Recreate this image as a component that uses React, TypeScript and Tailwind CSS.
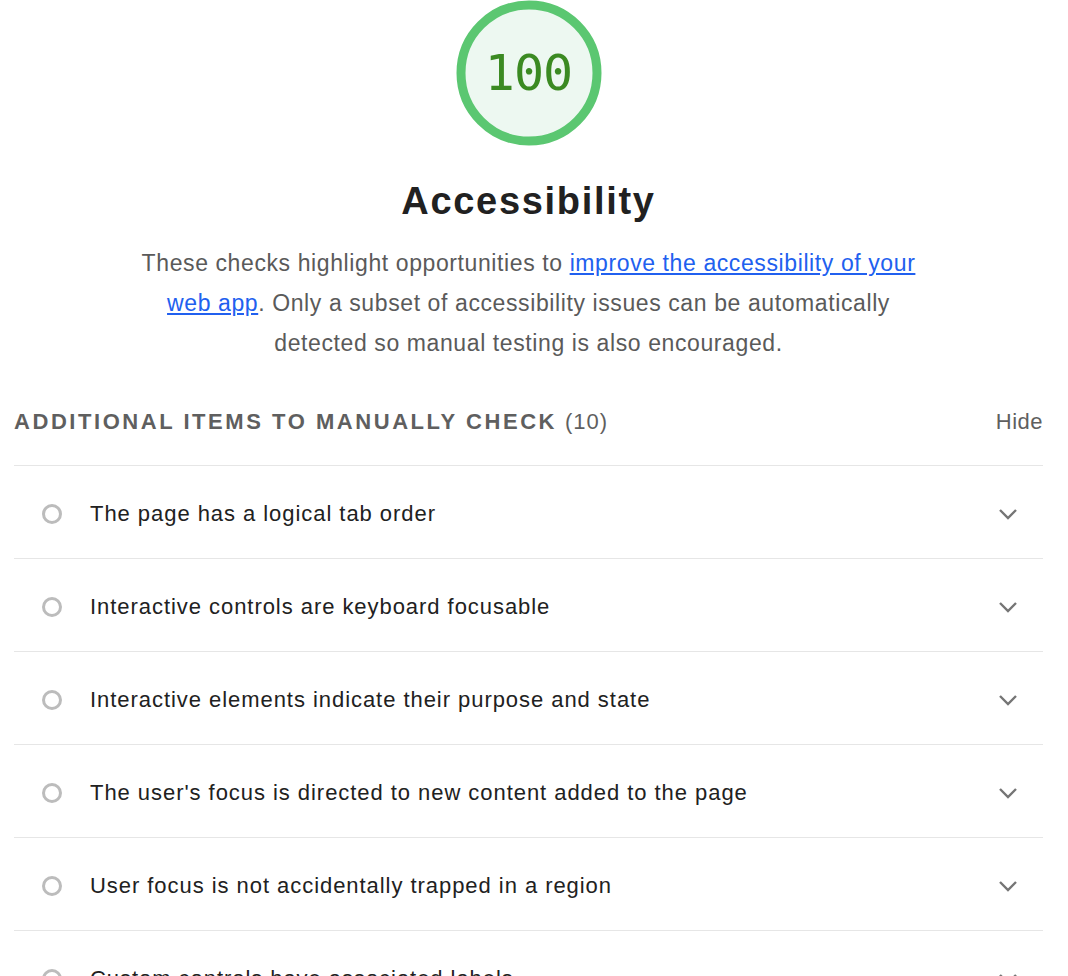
const items = [
  'The page has a logical tab order',
  'Interactive controls are keyboard focusable',
  'Interactive elements indicate their purpose and state',
  "The user's focus is directed to new content added to the page",
  'User focus is not accidentally trapped in a region',
  'Custom controls have associated labels',
];

function Gauge({ score }: { score: number }) {
  return (
    <div className="relative w-[148px] h-[148px]">
      <svg viewBox="0 0 148 148" className="absolute inset-0">
        <circle cx="74" cy="74" r="68" fill="#edf8f1" stroke="#5bc771" strokeWidth="9" />
      </svg>
      <div className="absolute inset-0 flex items-center justify-center font-['DejaVu_Sans_Mono',monospace] text-[50px] text-[#3b8a22] tracking-[-1px]">
        {score}
      </div>
    </div>
  );
}

function Chevron() {
  return (
    <svg width="20" height="12" viewBox="0 0 20 12" className="shrink-0">
      <polyline points="2,2 10,10 18,2" fill="none" stroke="#757575" strokeWidth="2.4" />
    </svg>
  );
}

function ManualItem({ title }: { title: string }) {
  return (
    <div className="flex items-center h-[93px] border-t border-[#e6e6e6] pt-[3px] pl-[28px] pr-[25px]">
      <span className="w-[20px] h-[20px] rounded-full border-[3px] border-[#bcbcbc] shrink-0" />
      <span className="ml-[28px] flex-1 text-[22px] tracking-[0.95px] text-[#212121] whitespace-nowrap">
        {title}
      </span>
      <Chevron />
    </div>
  );
}

export default function App() {
  return (
    <div className="bg-white font-['Liberation_Sans',Arial,sans-serif] overflow-hidden h-[976px]">
      <div className="w-[1029px] ml-[14px]">
        {/* score header */}
        <div className="flex flex-col items-center">
          <div className="-mt-[1px]">
            <Gauge score={100} />
          </div>
          <h1 className="mt-[32px] text-[38px] leading-[44px] font-bold text-[#212121] tracking-[1.7px]">
            Accessibility
          </h1>
          <p className="mt-[20px] w-[800px] text-center text-[23px] leading-[40px] tracking-[0.6px] text-[#5a5a5a]">
            These checks highlight opportunities to{' '}
            <a href="#" className="text-[#2160ef] underline">
              improve the accessibility of your web app
            </a>
            . Only a subset of accessibility issues can be automatically detected so manual testing is also encouraged.
          </p>
        </div>

        {/* manual section */}
        <div className="mt-[38px] flex items-center justify-between h-[40px]">
          <div className="text-[22px] text-[#5f5f5f]">
            <span className="font-bold uppercase tracking-[2.55px]">Additional items to manually check</span>
            <span className="ml-[8px] tracking-[1px]">(10)</span>
          </div>
          <span className="text-[22px] tracking-[0.5px] text-[#5f5f5f]">Hide</span>
        </div>
        <div className="mt-[24px]">
          {items.map((t) => (
            <ManualItem key={t} title={t} />
          ))}
        </div>
      </div>
    </div>
  );
}
